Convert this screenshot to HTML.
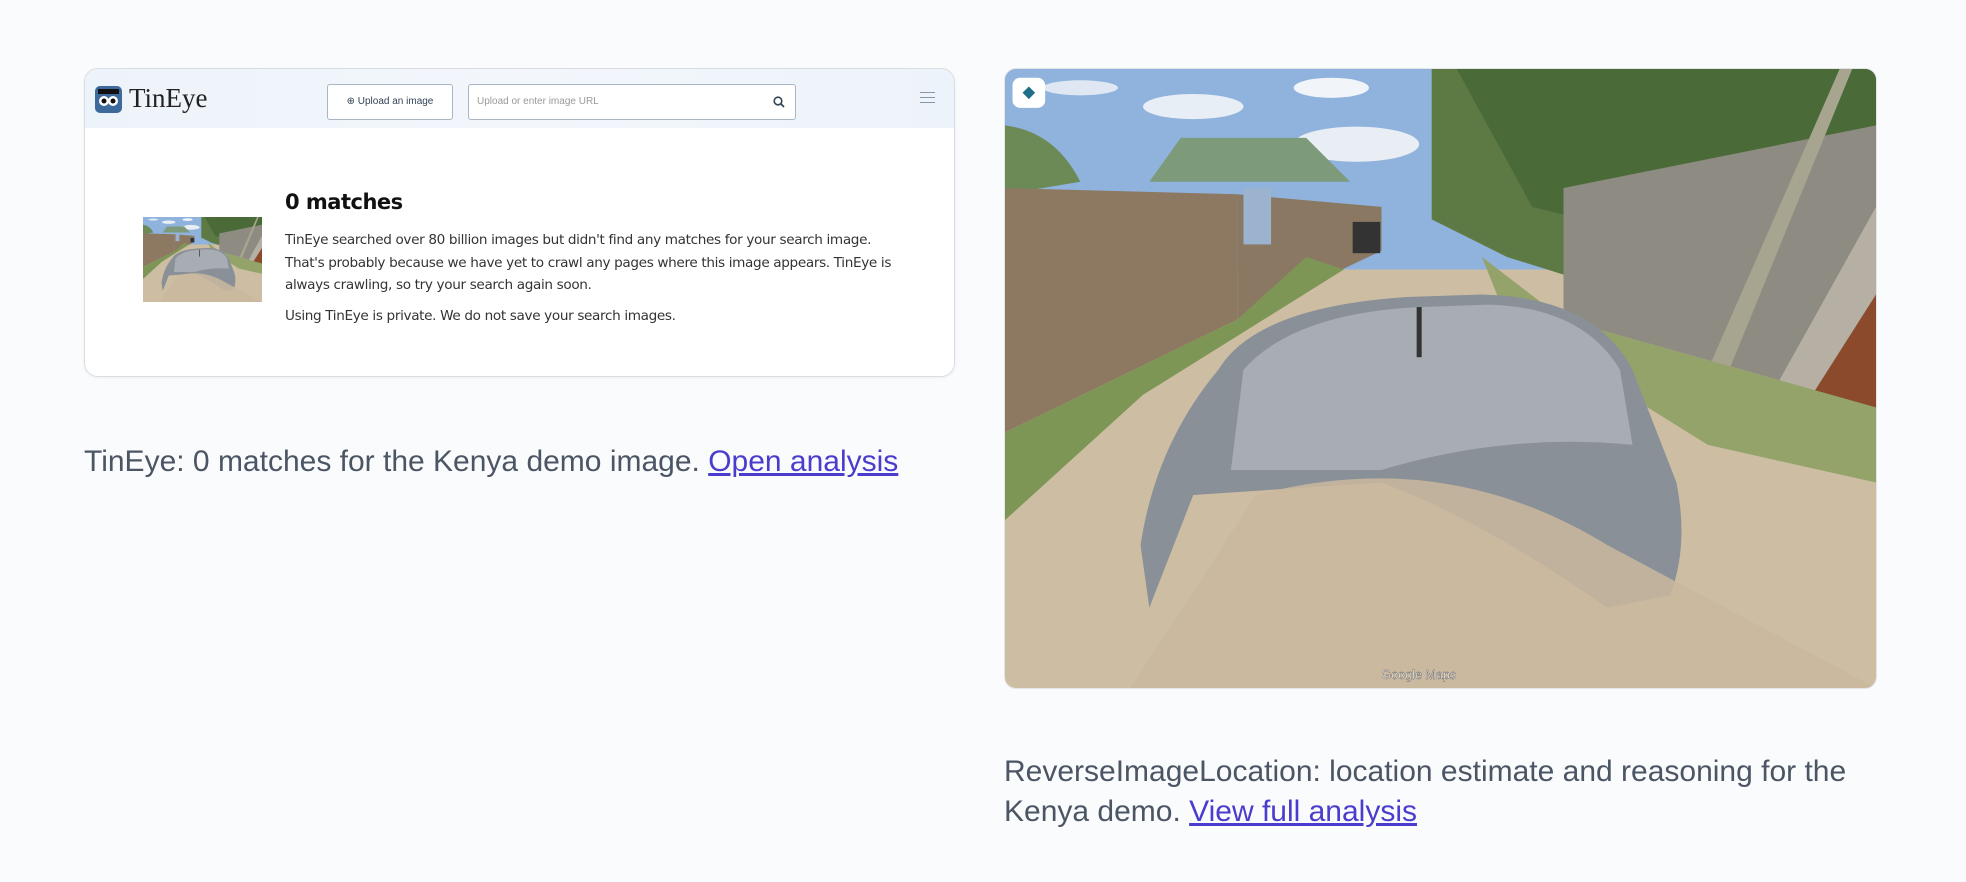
<!DOCTYPE html>
<html><head><meta charset="utf-8"><style>
html,body{margin:0;padding:0;width:1966px;height:882px;background:#fafbfd;overflow:hidden;font-family:"Liberation Sans",Arial,sans-serif}
.card{position:absolute;left:84px;top:68px;width:869px;height:307px;border:1px solid #d9dde3;border-radius:14px;background:#fff;overflow:hidden;box-shadow:0 1px 3px rgba(0,0,0,.05)}
.hdr{position:absolute;left:0;top:0;width:100%;height:59px;background:linear-gradient(90deg,#edf3fa,#f3f7fc 50%,#edf3fa)}
.logo{position:absolute;left:10px;top:17px;width:27px;height:27px;border-radius:5px;background:#3d6a9b}
.brand{position:absolute;left:44px;top:14px;font-family:"Liberation Serif",serif;font-size:27px;color:#222}
.btn{position:absolute;left:242px;top:15px;width:124px;height:34px;border:1px solid #a9b5c3;border-radius:3px;background:#fff;font-size:10px;color:#345;line-height:34px;text-align:center}
.inp{position:absolute;left:383px;top:15px;width:326px;height:34px;border:1px solid #a9b5c3;border-radius:3px;background:#fff;font-size:10px;color:#999;line-height:34px;text-indent:8px}
.ham{position:absolute;left:835px;top:23px;width:15px}
.ham i{display:block;height:1px;background:#8896a5;margin-bottom:4px}
.h{position:absolute;left:200px;top:121px;font-size:21px;font-weight:bold;color:#111;font-family:"DejaVu Sans",sans-serif;letter-spacing:-.5px}
.p{position:absolute;left:200px;top:160px;width:620px;font-size:13.6px;line-height:22.5px;color:#333;font-family:"DejaVu Sans",sans-serif;letter-spacing:-.35px}
.cap{position:absolute;font-size:30px;line-height:40px;color:#4b5563}
a{color:#4a3ccc;text-decoration:underline}
.img{position:absolute;left:1004px;top:68px;width:871px;height:619px;border-radius:12px;overflow:hidden;border:1px solid #e3e5e8}
</style></head><body>
<div class="card">
 <div class="hdr">
  <div class="logo"><svg width="27" height="27"><circle cx="9" cy="15" r="5" fill="#fff"/><circle cx="18" cy="15" r="5" fill="#fff"/><circle cx="9" cy="15" r="2.5" fill="#111"/><circle cx="18" cy="15" r="2.5" fill="#111"/><rect x="3" y="3" width="21" height="5" fill="#111"/></svg></div>
  <div class="brand">TinEye</div>
  <div class="btn">⊕ Upload an image</div>
  <div class="inp">Upload or enter image URL<svg style="position:absolute;right:10px;top:11px" width="12" height="12"><circle cx="5" cy="5" r="3.8" stroke="#345" stroke-width="1.6" fill="none"/><line x1="8" y1="8" x2="11" y2="11" stroke="#345" stroke-width="1.8"/></svg></div>
  <div class="ham"><i></i><i></i><i></i></div>
 </div>
 <svg style="position:absolute;left:58px;top:148px" width="119" height="85" viewBox="0 0 694 494" preserveAspectRatio="none"><use href="#scene"/></svg>
 <div class="h">0 matches</div>
 <div class="p">TinEye searched over 80 billion images but didn't find any matches for your search image. That's probably because we have yet to crawl any pages where this image appears. TinEye is always crawling, so try your search again soon.<div style="margin-top:8px">Using TinEye is private. We do not save your search images.</div></div>
</div>
<div class="cap" style="left:84px;top:442px">TinEye: 0 matches for the Kenya demo image. <a>Open analysis</a></div>
<div class="img"><svg width="871" height="619" viewBox="0 0 694 494" preserveAspectRatio="none">
<defs><g id="scene">
<rect width="694" height="494" fill="#cdbda3"/>
<rect width="694" height="160" fill="#8fb3dc"/>
<ellipse cx="150" cy="30" rx="40" ry="10" fill="#e8eef5"/><ellipse cx="260" cy="15" rx="30" ry="8" fill="#f1f4f8"/><ellipse cx="280" cy="60" rx="50" ry="14" fill="#e9eef4"/><ellipse cx="60" cy="15" rx="30" ry="6" fill="#dfe8f2"/>
<path d="M340 0H694V230L560 200 400 150 340 120Z" fill="#5d7a45"/>
<path d="M360 0H694V90L500 130 420 110Z" fill="#4a6a37"/>
<path d="M0 45 Q40 50 60 90 L0 100Z" fill="#6b8a55"/>
<path d="M115 90 L140 55 L240 55 L275 90Z" fill="#7d9a7a"/>
<path d="M0 95 L185 100 L185 200 L0 290Z" fill="#8d7862"/>
<path d="M185 100 L300 110 L300 145 L185 200Z" fill="#8a7863"/>
<rect x="190" y="95" width="22" height="45" fill="#9bb3cf"/>
<path d="M445 95 L694 45 L694 270 L445 200Z" fill="#8e8b82"/>
<path d="M560 240 L665 0 L675 0 L575 245Z" fill="#a7a58f"/>
<path d="M605 270 L694 110 L694 300Z" fill="#b5b0a3"/>
<path d="M640 265 L694 180 L694 290Z" fill="#8b4a2c"/>
<path d="M0 290 L185 200 L240 150 L270 160 L110 260 L0 360Z" fill="#7d9656"/>
<path d="M380 150 L445 200 L694 270 L694 330 L560 300 L400 200Z" fill="#94a36a"/>
<path d="M170 240 Q200 190 320 182 L380 180 Q470 182 500 240 L535 330 Q545 380 530 420 L480 430 Q380 360 300 330 L150 340 L115 430 L108 380 Q120 300 170 240Z" fill="#8a9097"/>
<path d="M190 240 Q230 195 330 190 L385 188 Q460 190 490 240 L500 300 Q400 290 300 320 L180 320Z" fill="#a7adb3"/>
<rect x="328" y="190" width="4" height="40" fill="#333"/>
<path d="M200 340 Q350 300 480 380 L694 494 L100 494Z" fill="#c9b89e" opacity=".85"/>
<rect x="277" y="122" width="22" height="25" fill="#333"/>
</g></defs><use href="#scene"/>
<rect x="6" y="7" width="26" height="24" rx="6" fill="#fff"/><path d="M19 14l5 5-5 5-5-5z" fill="#1f6f8b"/>
<text x="300" y="487" font-size="10" fill="#fff" stroke="#555" stroke-width=".3" font-family="Liberation Sans">Google Maps</text>
</svg></div>
<div class="cap" style="left:1004px;top:752px;width:900px">ReverseImageLocation: location estimate and reasoning for the Kenya demo. <a>View full analysis</a></div>
</body></html>
